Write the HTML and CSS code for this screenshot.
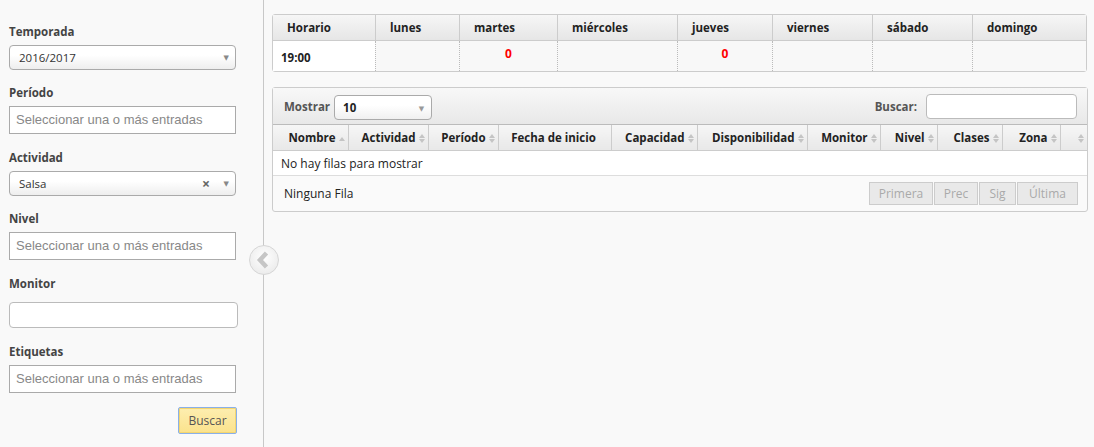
FILE: index.html
```html
<!DOCTYPE html>
<html lang="es">
<head>
  <meta charset="UTF-8">
  <title>Horarios</title>
  <link rel="stylesheet" href="styles.css">
</head>
<body>
  <div class="layout">
    <!-- Filtros -->
    <aside class="sidebar">
      <label class="field-label">Temporada</label>
      <div class="select-box">2016/2017 <span class="arrow">&#9660;</span></div>

      <label class="field-label">Período</label>
      <div class="multi-input">Seleccionar una o más entradas</div>

      <label class="field-label">Actividad</label>
      <div class="select-box">Salsa <span class="clear">&#215;</span><span class="arrow">&#9660;</span></div>

      <label class="field-label">Nivel</label>
      <div class="multi-input">Seleccionar una o más entradas</div>

      <label class="field-label">Monitor</label>
      <div class="text-input"></div>

      <label class="field-label">Etiquetas</label>
      <div class="multi-input">Seleccionar una o más entradas</div>

      <div class="actions">
        <button class="btn-search">Buscar</button>
      </div>

      <div class="collapse-toggle">
        <svg width="30" height="30" viewBox="0 0 30 30">
          <path d="M17.5 8 L11 15 L17.5 22" fill="none" stroke="#c6c6c6" stroke-width="4.5" stroke-linejoin="miter"/>
        </svg>
      </div>
    </aside>

    <main class="content">
      <!-- Horario semanal -->
      <table class="schedule">
        <colgroup>
          <col style="width:102px"><col style="width:84px"><col style="width:98px"><col style="width:120px">
          <col style="width:95px"><col style="width:100px"><col style="width:100px"><col style="width:114px">
        </colgroup>
        <thead>
          <tr>
            <th>Horario</th>
            <th>lunes</th>
            <th>martes</th>
            <th>miércoles</th>
            <th>jueves</th>
            <th>viernes</th>
            <th>sábado</th>
            <th>domingo</th>
          </tr>
        </thead>
        <tbody>
          <tr>
            <td class="hour">19:00</td>
            <td></td>
            <td class="count">0</td>
            <td></td>
            <td class="count">0</td>
            <td></td>
            <td></td>
            <td></td>
          </tr>
        </tbody>
      </table>

      <!-- Listado de clases -->
      <div class="grid-panel">
        <div class="grid-toolbar">
          <span class="tb-label">Mostrar</span>
          <div class="page-size">10 <span class="arrow">&#9660;</span></div>
          <span class="spacer"></span>
          <span class="tb-label">Buscar:</span>
          <div class="search-input"></div>
        </div>
        <table class="grid">
          <colgroup>
            <col style="width:75px"><col style="width:80px"><col style="width:70px"><col style="width:113px">
            <col style="width:86px"><col style="width:110px"><col style="width:73px"><col style="width:57px">
            <col style="width:65px"><col style="width:58px"><col>
          </colgroup>
          <thead>
            <tr>
              <th>Nombre <span class="sort up"></span></th>
              <th>Actividad <span class="sort"></span></th>
              <th>Período <span class="sort"></span></th>
              <th class="centered">Fecha de inicio</th>
              <th>Capacidad <span class="sort"></span></th>
              <th>Disponibilidad <span class="sort"></span></th>
              <th>Monitor <span class="sort"></span></th>
              <th>Nivel <span class="sort"></span></th>
              <th>Clases <span class="sort"></span></th>
              <th>Zona <span class="sort"></span></th>
              <th><span class="sort"></span></th>
            </tr>
          </thead>
          <tbody>
            <tr>
              <td colspan="11" class="empty">No hay filas para mostrar</td>
            </tr>
          </tbody>
        </table>
        <div class="grid-footer">
          <span>Ninguna Fila</span>
          <div class="pager">
            <button class="p-first">Primera</button><button class="p-prev">Prec</button><button class="p-next">Sig</button><button class="p-last">Última</button>
          </div>
        </div>
      </div>
    </main>
  </div>
</body>
</html>
```

FILE: styles.css
```css
body {
  margin: 0;
  background: #f9f9f9;
  font-family: "Open Sans", "DejaVu Sans", sans-serif;
  font-size: 12px;
  color: #222;
}

.layout {
  display: flex;
  height: 447px;
}

/* Sidebar with filters */
.sidebar {
  position: relative;
  width: 254px;
  padding: 22px 0 0 9px;
  border-right: 1px solid #c8c8c8;
  box-sizing: content-box;
}

.field-label {
  display: block;
  font-weight: bold;
  font-size: 11.5px;
  color: #444;
  height: 19px;
  line-height: 19px;
  margin-bottom: 4px;
}

.select-box {
  position: relative;
  width: 227px;
  height: 25px;
  box-sizing: border-box;
  border: 1px solid #aaa;
  border-radius: 4px;
  background: linear-gradient(#fff 40%, #eee);
  padding-left: 9px;
  line-height: 23px;
  font-size: 11.5px;
  color: #333;
  margin-bottom: 13px;
}

.select-box .arrow {
  position: absolute;
  right: 6px;
  top: 0;
  font-size: 7px;
  color: #888;
}

.select-box .clear {
  position: absolute;
  right: 25px;
  top: 0;
  font-size: 14px;
  font-weight: bold;
  color: #666;
}

.multi-input {
  width: 227px;
  height: 28px;
  box-sizing: border-box;
  border: 1px solid #aaa;
  background: #fff;
  padding-left: 6px;
  line-height: 26px;
  font-family: "Liberation Sans", Arial, sans-serif;
  font-size: 13px;
  color: #888;
  margin-bottom: 14px;
}

.text-input {
  width: 229px;
  height: 26px;
  box-sizing: border-box;
  border: 1px solid #bbb;
  border-radius: 4px;
  background: #fff;
  margin-top: 9px;
  margin-bottom: 14px;
}

.actions {
  width: 228px;
  margin-top: 2px;
  display: flex;
  justify-content: flex-end;
}

.btn-search {
  width: 59px;
  height: 27px;
  border: 1px solid #8ab0e8;
  border-radius: 2px;
  background: linear-gradient(#fdeeb0, #fbe28c);
  box-shadow: inset 0 0 0 1px #f4d670;
  font-family: "Open Sans", sans-serif;
  font-size: 12px;
  color: #555;
  padding: 0;
}

.collapse-toggle {
  position: absolute;
  right: -16px;
  top: 245px;
  width: 30px;
  height: 30px;
  box-sizing: border-box;
  border-radius: 50%;
  border: 1px solid #d6d6d6;
  background: radial-gradient(circle at 50% 40%, #fff, #e6e6e6);
}

.collapse-toggle svg {
  display: block;
  margin: -1px 0 0 -1px;
}

/* Right content */
.content {
  padding: 14px 0 0 8px;
  width: 815px;
}

.schedule {
  width: 815px;
  border-collapse: separate;
  border-spacing: 0;
  border: 1px solid #ccc;
  border-radius: 3px;
  table-layout: fixed;
}

.schedule th {
  height: 25px;
  padding: 0 0 0 14px;
  text-align: left;
  font-weight: bold;
  font-size: 11.5px;
  color: #222;
  background: linear-gradient(#f6f6f6, #e6e6e6);
  border-left: 1px solid #ccc;
  border-bottom: 1px solid #ccc;
}

.schedule th:first-child { border-left: none; }

.schedule td {
  height: 30px;
  background: #f8f8f8;
  border-left: 1px dotted #bbb;
  padding: 0;
}

.schedule td.hour {
  border-left: none;
  background: #fff;
  font-weight: bold;
  padding: 3px 0 0 8px;
  height: 27px;
  font-size: 11.5px;
}

.schedule td.count {
  color: #f00;
  font-weight: bold;
  text-align: center;
  vertical-align: top;
  padding-top: 4px;
  height: 26px;
  font-size: 12px;
}

.grid-panel {
  margin-top: 15px;
  width: 814px;
  border: 1px solid #ccc;
  border-radius: 3px;
  background: #fafafa;
}

.grid-toolbar {
  display: flex;
  align-items: center;
  height: 36px;
  padding: 0 10px 0 11px;
  background: linear-gradient(#f8f8f8, #e8e8e8);
  border-bottom: 1px solid #bbb;
}

.tb-label {
  font-weight: bold;
  font-size: 11.5px;
  color: #555;
}

.spacer { flex: 1; }

.page-size {
  position: relative;
  width: 98px;
  height: 25px;
  box-sizing: border-box;
  margin-left: 4px;
  margin-top: 2px;
  border: 1px solid #aaa;
  border-radius: 4px;
  background: linear-gradient(#fff 40%, #f0f0f0);
  padding-left: 8px;
  line-height: 23px;
  font-weight: bold;
  font-size: 11.5px;
}

.page-size .arrow {
  position: absolute;
  right: 7px;
  top: 1px;
  font-size: 7px;
  color: #999;
}

.search-input {
  width: 151px;
  height: 25px;
  box-sizing: border-box;
  margin-left: 9px;
  border: 1px solid #bbb;
  border-radius: 4px;
  background: #fff;
}

.grid {
  width: 100%;
  border-collapse: collapse;
  table-layout: fixed;
}

.grid th {
  height: 25px;
  padding: 0 2px 0 0;
  font-weight: bold;
  font-size: 11.5px;
  text-align: right;
  white-space: nowrap;
  overflow: hidden;
  background: linear-gradient(#f6f6f6, #e8e8e8);
  border-left: 1px solid #ccc;
  border-bottom: 1px solid #ccc;
}

.grid th:first-child { border-left: none; }

.grid th.centered { text-align: center; }

.sort {
  display: inline-block;
  position: relative;
  width: 7px;
  height: 9px;
  vertical-align: -1px;
}

.sort::before,
.sort::after {
  content: "";
  position: absolute;
  left: 0;
  border-left: 3.5px solid transparent;
  border-right: 3.5px solid transparent;
}

.sort::before {
  top: 0;
  border-bottom: 4px solid #c4c4c4;
}

.sort::after {
  bottom: 0;
  border-top: 4px solid #c4c4c4;
}

.sort.up::after { display: none; }
.sort.up::before { top: 3px; }

.grid td.empty {
  height: 24px;
  padding: 0 0 0 8px;
  background: #fff;
  font-size: 12px;
  border-bottom: 1px solid #ddd;
}

.grid-footer {
  display: flex;
  align-items: center;
  justify-content: space-between;
  height: 35px;
  padding: 0 9px 0 11px;
  font-size: 12px;
}

.pager {
  display: flex;
}

.pager button {
  height: 23px;
  padding: 0;
  margin-left: 1px;
  border: 1px solid #ccc;
  background: #e9e9e9;
  color: #aaa;
  font-family: "Open Sans", sans-serif;
  font-size: 12px;
}

.pager .p-first { width: 64px; }
.pager .p-prev { width: 44px; }
.pager .p-next { width: 37px; }
.pager .p-last { width: 61px; }
```
